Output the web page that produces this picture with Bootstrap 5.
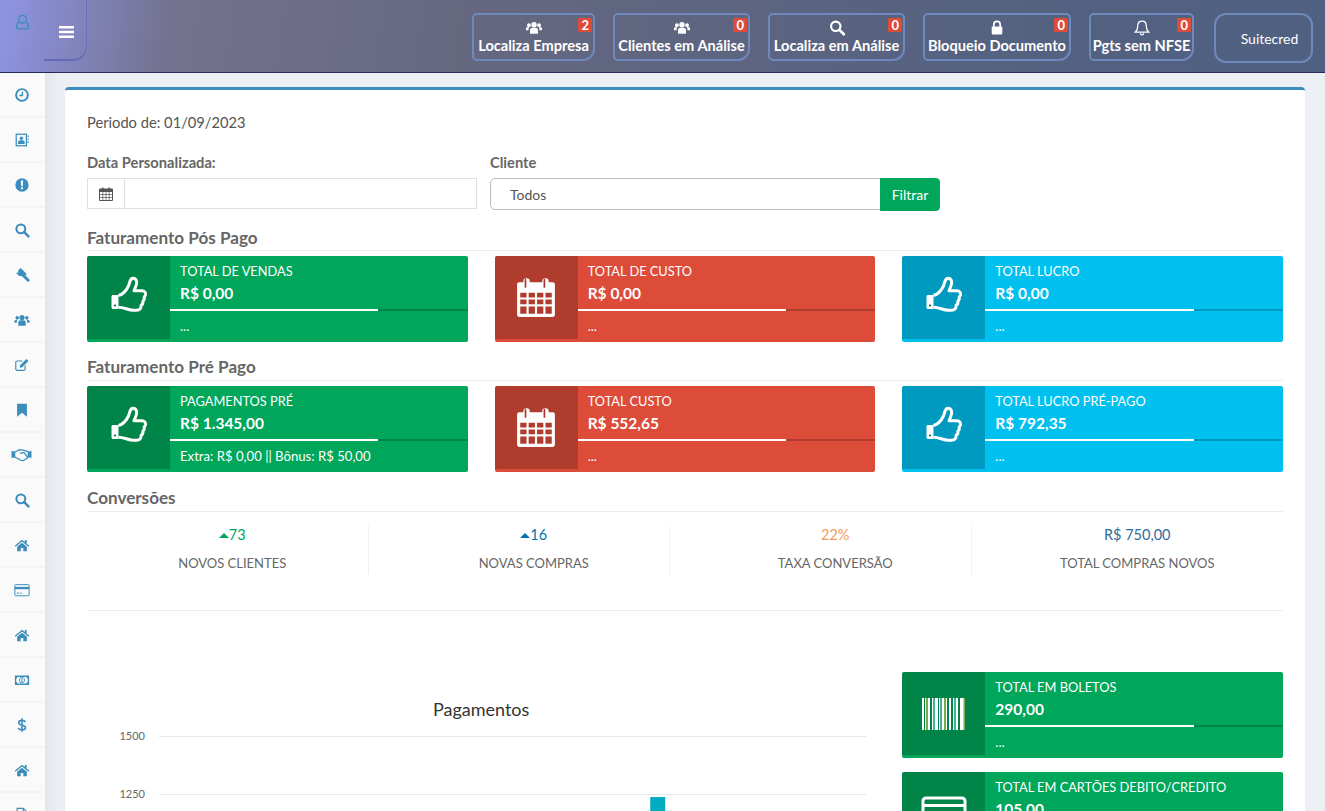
<!DOCTYPE html>
<html lang="pt-BR"><head><meta charset="utf-8"><title>Suitecred</title>
<link href="https://cdn.jsdelivr.net/npm/bootstrap@5.3.0/dist/css/bootstrap.min.css" rel="stylesheet">
<style>
html,body{height:811px;overflow:hidden}
body{font-family:Lato,"Noto Sans",sans-serif;font-size:14.7px;color:#444;background:#ecf0f5}
.topbar{height:73px;background:linear-gradient(100deg,#8f95e4 0,#73728f 13%,#666880 35%,#566280 70%,#4f6081 100%);border-bottom:1px solid #262b5a;flex-wrap:nowrap}
.usericon{width:44px;color:#3c8dbc;padding-top:13px}
.toggler{width:43px;height:61px;border:0;border-right:1px solid #6b70b8;border-bottom:2px solid #6469b8;border-bottom-right-radius:14px;background:transparent;padding:4px 0 0 2px}
.hbtn{position:relative;height:48px;border:2px solid #6f88bd;border-radius:5px 5px 12px 5px;color:#fff;font-weight:700;font-size:14.6px;line-height:1;background:transparent;text-align:center;padding:4px 0 0;white-space:nowrap;display:block}
.hbtn svg{display:block;margin:0 auto 3px;height:17px;width:18px}
.hb1{width:123px}.hb2{width:137px}.hb3{width:137px}.hb4{width:148px}.hb5{width:105px}
.hbgroup{gap:18px;margin-right:20px;margin-top:13px}
.hcount{position:absolute;top:3px;right:1px;background:#dd4b39;color:#fff;font-size:13px;font-weight:700;padding:0 3px;line-height:14px;border-radius:1px}
.brandbtn{width:99px;height:50px;margin-top:13px;border:2px solid #6f88bd;border-radius:12px;color:#fff;background:transparent;font-size:14px;margin-right:12px;padding:0 0 0 12px}
.shell{height:738px;overflow:hidden}
.sidenav{width:45px;flex:none;background:#fafafa;flex-wrap:nowrap;height:738px;overflow:hidden}
.sidenav a{height:45px;display:flex;align-items:center;justify-content:center;color:#3c8dbc;border-bottom:2px solid #f4f4f5;flex:none;padding:0 2px 0 0}
.sidenav svg{width:16px;height:16px}
.sidenav svg.widesvg{width:21px;height:19px}
.mainarea{flex:1;min-width:0;padding:14px 20px 0;background:linear-gradient(90deg,#e2e6ec 0,#ecf0f5 14px)}
.panel{background:#fff;border-top:3px solid #3c8dbc;border-radius:4px 4px 0 0;padding:21px 22px 0;height:724px;overflow:hidden;box-shadow:0 1px 1px rgba(0,0,0,.1)}
.periodo{line-height:22px;margin-bottom:20px;color:#555}
.flabel{font-size:14.7px;font-weight:700;color:#666;line-height:18px;margin-bottom:7px}
.filtercols{display:flex;gap:13px;margin-bottom:16px}
.datecol{width:390px}.clientcol{width:451px}
.dategroup .input-group-text{width:38px;background:#fff;border-radius:0;border-color:#dde0e6;padding:0;justify-content:center;height:31px;color:#555}
.dategroup .form-control{height:31px;border-radius:0;border-color:#dde0e6;min-height:31px}
.clientcol .clientsel{height:32px;width:391px;flex:none;background-image:none;border-radius:5px 0 0 5px;padding:0 19px;font-size:14px;color:#555;border-color:#b9bcc4}
.filterbtn{background:#00a65a;border-color:#00a65a;color:#fff;font-size:14px;width:60px;height:33px;padding:0;border-radius:0 4px 4px 0}
.sectitle{font-size:17.1px;font-weight:700;color:#666;border-bottom:1px solid #eee;line-height:21px;padding-bottom:2px;margin-bottom:5px}
.sectitlelow{padding-bottom:3px}
.boxrow{--bs-gutter-x:27px;margin-bottom:14px}
.boxrowlast{margin-bottom:15px}
.infobox{height:86px;border-radius:2px;color:#fff;display:flex;overflow:hidden;font-size:12.8px}
.ibgreen{background:#00a65a}.ibred{background:#dd4b39}.ibblue{background:#00c0ef}
.ibicon{width:83px;flex:none;height:83px;display:flex;align-items:center;justify-content:center;background:rgba(0,0,0,.2)}
.thumbsvg{width:40px;height:40px;margin-bottom:3px}
.calsvg{width:42px;height:42px}
.ibbody{flex:1;min-width:0}
.ibtext{padding:5px 10px 0;line-height:20px;height:53px}
.ibnum{display:block;font-weight:700;font-size:15.5px;line-height:22px;margin-top:1px}
.ibbar{height:2px;border-radius:0;background:rgba(0,0,0,.2);margin:0}
.ibbar .progress-bar{background:#fff}
.ibfoot{padding:0 10px;line-height:20px;margin-top:5px;font-size:13.15px}
.statrow{--bs-gutter-x:30px;margin-inline:-5px;margin-bottom:0;margin-top:14px}
.statcell{text-align:center;height:48px;border-right:1px solid #f0f0f0}
.statlast{border-right:0}
.statval{font-size:14.5px;line-height:18px;margin-bottom:9px}
.statlab{font-size:13px;line-height:20px;color:#666}
.vgreen{color:#00a65a}.vblue{color:#0073b7}.vorange{color:#f39c5b}.vnavy{color:#2f6c9e}
.tri{display:inline-block;width:0;height:0;border:5px solid transparent;border-top:0;vertical-align:2px}
.trigreen{border-bottom-color:#00a65a}.triblue{border-bottom-color:#0073b7}
.sep{border-top:1px solid #eee;margin:36px 0 61px}
.bottomrow{--bs-gutter-x:27px}
.chartbox{display:block;width:100%;height:140px;margin-top:8px}
.chartbox text{font-family:Lato,"Noto Sans",sans-serif}
.bbox{margin-bottom:14px}
.barcodewrap{width:43px;height:32px}
</style></head>
<body>
<svg width="0" height="0" class="d-block position-absolute">
<defs>
<symbol id="i-clock" viewBox="0 0 18 18"><circle cx="9" cy="9" r="6.6" fill="none" stroke="currentColor" stroke-width="2.2"/><path d="M9.5 5v4.600H6" fill="none" stroke="currentColor" stroke-width="1.500"/></symbol>
<symbol id="i-book" viewBox="0 0 18 18"><rect x="2.500" y="2.500" width="11.500" height="13" fill="none" stroke="currentColor" stroke-width="1.400"/><circle cx="8.300" cy="7" r="1.900" fill="currentColor"/><path d="M4.600 13.500v-2.200c0-1.400 1.200-2 3.700-2s3.700.6 3.700 2v2.200z" fill="currentColor"/><path d="M15.200 4h1.400v1.600h-1.400zM15.200 7.200h1.400v1.600h-1.400zM15.200 10.400h1.400V12h-1.400z" fill="currentColor"/></symbol>
<symbol id="i-excl" viewBox="0 0 18 18"><circle cx="9" cy="9" r="7.500" fill="currentColor"/><path d="M7.800 4h2.400l-.3 6.400H8.100zM7.900 11.500h2.200v2.200H7.900z" fill="#fff"/></symbol>
<symbol id="i-search" viewBox="0 0 18 18"><circle cx="7.700" cy="7.700" r="5" fill="none" stroke="currentColor" stroke-width="2.300"/><path d="M11.500 11.500l4.700 4.700" stroke="currentColor" stroke-width="2.800" stroke-linecap="round"/></symbol>
<symbol id="i-gavel" viewBox="0 0 18 18"><path d="M7.500 1l6.800 6.800-4 4-1.700-1.700-2.700 0L2 6.400l2.700 0 .1-2.700z" fill="currentColor"/><path d="M10.300 11.600l2.400-2.400 4.300 4.500a1.700 1.700 0 0 1-2.400 2.400z" fill="currentColor"/></symbol>
<symbol id="i-users" viewBox="0 0 18 18"><circle cx="9" cy="6.200" r="2.900" fill="currentColor"/><circle cx="3.600" cy="6.600" r="2" fill="currentColor"/><circle cx="14.400" cy="6.600" r="2" fill="currentColor"/><path d="M4.800 15.500v-3.700c0-1.600 1.200-2.500 2.500-2.500h3.400c1.300 0 2.500.9 2.500 2.500v3.700z" fill="currentColor"/><path d="M.5 12v-1.600c0-1 .8-1.800 1.800-1.800h1.600c-.5.700-.7 1.500-.7 2.400V12zM17.500 12v-1.600c0-1-.8-1.800-1.800-1.800h-1.600c.5.700.7 1.500.7 2.400V12z" fill="currentColor"/></symbol>
<symbol id="i-edit" viewBox="0 0 18 18"><path d="M12.500 9.500v4a1.500 1.500 0 0 1-1.500 1.500H3.500A1.500 1.500 0 0 1 2 13.500V6a1.500 1.500 0 0 1 1.500-1.500h6" fill="none" stroke="currentColor" stroke-width="1.300"/><path d="M6.500 12l.4-2.800 7-7 2.400 2.400-7 7z" fill="currentColor"/></symbol>
<symbol id="i-bookmark" viewBox="0 0 18 18"><path d="M3.500 2h11v14.500L9 12l-5.500 4.500z" fill="currentColor"/></symbol>
<symbol id="i-hands" viewBox="0 0 20 18"><path d="M.5 5.500l3 1v5l-3 .8zM19.500 5.500l-3 1v5l3 .8z" fill="currentColor"/><path d="M3.500 6.500C6 6 7 4.200 9.500 4.500c2 .2 4.500.4 7 2v5c-1.500 1-3 2.600-5 3.300-1.800.6-3.500-1-5-2-1-.6-2-1-3-1.300zM8.500 7.500c1.500 1 2.800-.7 4-.3l3 4" fill="none" stroke="currentColor" stroke-width="1.200"/></symbol>
<symbol id="i-home" viewBox="0 0 18 18"><path d="M9 3L.8 9.800l1 1.200L9 5l7.200 6 1-1.200-3-2.500V3.500h-2v2.100z" fill="currentColor"/><path d="M3.500 11L9 6.400l5.500 4.600v5h-4v-3.500h-3V16h-4z" fill="currentColor"/></symbol>
<symbol id="i-card" viewBox="0 0 18 18"><rect x="1" y="3" width="16" height="12.500" rx="1" fill="none" stroke="currentColor" stroke-width="1.100"/><rect x="1" y="5.500" width="16" height="2.600" fill="currentColor"/><path d="M3 12.500h3M7 12.500h2" stroke="currentColor" stroke-width="1"/></symbol>
<symbol id="i-money" viewBox="0 0 18 18"><path fill-rule="evenodd" d="M1 4h16v10.500H1zM4 5.500A2.500 2.500 0 0 1 2.500 7.500v3.500A2.500 2.500 0 0 1 4 13h10a2.500 2.500 0 0 1 1.500-2V7.500A2.500 2.500 0 0 1 14 5.500z" fill="currentColor"/><circle cx="9" cy="9.200" r="3" fill="none" stroke="currentColor" stroke-width="1"/><path d="M9 7.500v3.500" stroke="currentColor" stroke-width="1.200"/></symbol>
<symbol id="i-dollar" viewBox="0 0 18 18"><path d="M13 5.500C12 4.200 10.500 3.800 9 3.800c-2 0-3.700 1-3.700 2.700 0 3.700 7.600 1.800 7.600 5.300 0 1.800-1.800 2.700-3.900 2.700-1.700 0-3.300-.6-4.300-1.800M9 1.500v15" fill="none" stroke="currentColor" stroke-width="1.800"/></symbol>
<symbol id="i-file" viewBox="0 0 18 18"><path d="M3.500 1.500h7l4 4v11h-11zM10.500 1.500v4h4" fill="none" stroke="currentColor" stroke-width="1.300"/></symbol>
<symbol id="i-lock" viewBox="0 0 17 15"><rect x="3.500" y="6.500" width="10" height="7.500" rx="1" fill="currentColor"/><path d="M5.500 7V4.800a3 3 0 0 1 6 0V7" fill="none" stroke="currentColor" stroke-width="1.600"/></symbol>
<symbol id="i-bell" viewBox="0 0 17 15"><path d="M8.500 1.500c-2.700 0-4 1.900-4 4.300 0 3-.9 4.700-2.200 6h12.400c-1.300-1.300-2.200-3-2.200-6 0-2.400-1.300-4.300-4-4.300zM7 13a1.500 1.500 0 0 0 3 0" fill="none" stroke="currentColor" stroke-width="1.200"/></symbol>
<symbol id="i-thumb" viewBox="0 0 40 40"><path d="M9.500 19.500c4-1 8-5.500 10-9.500 1-2.200 1.200-6.500 3.500-7.500 2.500-1 4.700 1 4.700 4 0 3-1.800 5.800-2.700 8.200h8c2.500 0 3.800 1.800 3.500 4-.2 1-.8 1.700-1.400 2.300.6 2-.1 3.300-1.200 4.200.3 2-.4 3.400-1.800 4.200.2 3-1.500 4.800-4.500 4.800h-3.500c-5 0-9-3-14.600-3" fill="none" stroke="#fff" stroke-width="3" stroke-linejoin="round"/><path d="M2.500 20.500c0-1 .8-1.500 1.500-1.500h5.500v14H4c-.8 0-1.500-.6-1.500-1.500z" fill="#fff"/><circle cx="6" cy="29.500" r="1.100" fill="#00703c"/></symbol>
<symbol id="i-cal" viewBox="0 0 40 40"><path fill="#fff" fill-rule="evenodd" d="M4 5h4V3.500c0-3 6-3 6 0V5h12V3.500c0-3 6-3 6 0V5h4a2 2 0 0 1 2 2v29a2 2 0 0 1-2 2H4a2 2 0 0 1-2-2V7a2 2 0 0 1 2-2zM5 15v4.500h6V15zm8 0v4.500h6V15zm8 0v4.500h6V15zm8 0v4.500h6V15zM5 21.500V26h6v-4.500zm8 0V26h6v-4.500zm8 0V26h6v-4.500zm8 0V26h6v-4.500zM5 28v7h6v-7zm8 0v7h6v-7zm8 0v7h6v-7zm8 0v7h6v-7z"/><path d="M10 2.500v7M28 2.500v7" stroke="#a9382a" stroke-width="1.600" stroke-linecap="round"/></symbol>
</defs></svg>

<header class="topbar d-flex align-items-start">
  <div class="usericon d-flex justify-content-center">
    <svg width="17" height="19" viewBox="0 0 20 24"><circle cx="10" cy="8" r="5" fill="none" stroke="currentColor" stroke-width="1.700"/><path d="M6 11.500C3 12.500 2.500 15 2.500 18c0 1.200.6 2 2 2h11c1.400 0 2-.8 2-2 0-3-.5-5.500-3.500-6.500" fill="none" stroke="currentColor" stroke-width="1.700"/></svg>
  </div>
  <button class="toggler d-flex align-items-center justify-content-center" type="button" aria-label="menu">
    <svg width="15" height="12" viewBox="0 0 15 12"><path d="M0 0h15v2.500H0zM0 4.700h15v2.500H0zM0 9.400h15v2.500H0z" fill="#fff"/></svg>
  </button>
  <div class="ms-auto d-flex align-items-start hbgroup">
    <a class="hbtn hb1 text-decoration-none"><svg class="text-white"><use href="#i-users"/></svg>Localiza Empresa<span class="hcount">2</span></a>
    <a class="hbtn hb2 text-decoration-none"><svg class="text-white"><use href="#i-users"/></svg>Clientes em Análise<span class="hcount">0</span></a>
    <a class="hbtn hb3 text-decoration-none"><svg class="text-white"><use href="#i-search"/></svg>Localiza em Análise<span class="hcount">0</span></a>
    <a class="hbtn hb4 text-decoration-none"><svg class="text-white"><use href="#i-lock"/></svg>Bloqueio Documento<span class="hcount">0</span></a>
    <a class="hbtn hb5 text-decoration-none"><svg class="text-white"><use href="#i-bell"/></svg>Pgts sem NFSE<span class="hcount">0</span></a>
  </div>
  <button class="brandbtn" type="button">Suitecred</button>
</header>

<div class="shell d-flex">
  <nav class="sidenav d-flex flex-column nav">
    <a href="#"><svg><use href="#i-clock"/></svg></a>
    <a href="#"><svg><use href="#i-book"/></svg></a>
    <a href="#"><svg><use href="#i-excl"/></svg></a>
    <a href="#"><svg><use href="#i-search"/></svg></a>
    <a href="#"><svg><use href="#i-gavel"/></svg></a>
    <a href="#"><svg><use href="#i-users"/></svg></a>
    <a href="#"><svg><use href="#i-edit"/></svg></a>
    <a href="#"><svg><use href="#i-bookmark"/></svg></a>
    <a href="#"><svg class="widesvg"><use href="#i-hands"/></svg></a>
    <a href="#"><svg><use href="#i-search"/></svg></a>
    <a href="#"><svg><use href="#i-home"/></svg></a>
    <a href="#"><svg><use href="#i-card"/></svg></a>
    <a href="#"><svg><use href="#i-home"/></svg></a>
    <a href="#"><svg><use href="#i-money"/></svg></a>
    <a href="#"><svg><use href="#i-dollar"/></svg></a>
    <a href="#"><svg><use href="#i-home"/></svg></a>
    <a href="#"><svg><use href="#i-file"/></svg></a>
  </nav>
  <main class="mainarea">
    <section class="panel">
      <p class="periodo">Periodo de: 01/09/2023</p>
      <div class="filtercols">
        <div class="datecol">
          <div class="flabel">Data Personalizada:</div>
          <div class="input-group dategroup">
            <span class="input-group-text"><svg width="16" height="16" viewBox="0 0 16 16"><path d="M1.500 3h13v11.500h-13z" fill="none" stroke="#555" stroke-width="1"/><path d="M1.500 3h13v3h-13zM4 1.500h1.500V4H4zM10.500 1.500H12V4h-1.500z" fill="#555"/><path d="M1.500 8.500h13M1.500 11.500h13M4.800 6v8.500M8 6v8.500M11.200 6v8.500" stroke="#555" stroke-width=".7"/></svg></span>
            <input class="form-control" type="text" aria-label="Data">
          </div>
        </div>
        <div class="clientcol">
          <div class="flabel">Cliente</div>
          <div class="input-group flex-nowrap">
            <select class="form-select clientsel" aria-label="Cliente"><option>Todos</option></select>
            <button class="btn filterbtn" type="button">Filtrar</button>
          </div>
        </div>
      </div>

      <h2 class="sectitle">Faturamento Pós Pago</h2>
      <div class="row boxrow">
        <div class="col-4"><div class="infobox ibgreen"><div class="ibicon"><svg class="thumbsvg"><use href="#i-thumb"/></svg></div><div class="ibbody"><div class="ibtext">TOTAL DE VENDAS<span class="ibnum">R$ 0,00</span></div><div class="progress ibbar"><div class="progress-bar" style="width:70%"></div></div><div class="ibfoot">...</div></div></div></div>
        <div class="col-4"><div class="infobox ibred"><div class="ibicon"><svg class="calsvg"><use href="#i-cal"/></svg></div><div class="ibbody"><div class="ibtext">TOTAL DE CUSTO<span class="ibnum">R$ 0,00</span></div><div class="progress ibbar"><div class="progress-bar" style="width:70%"></div></div><div class="ibfoot">...</div></div></div></div>
        <div class="col-4"><div class="infobox ibblue"><div class="ibicon"><svg class="thumbsvg"><use href="#i-thumb"/></svg></div><div class="ibbody"><div class="ibtext">TOTAL LUCRO<span class="ibnum">R$ 0,00</span></div><div class="progress ibbar"><div class="progress-bar" style="width:70%"></div></div><div class="ibfoot">...</div></div></div></div>
      </div>

      <h2 class="sectitle sectitlelow">Faturamento Pré Pago</h2>
      <div class="row boxrow boxrowlast">
        <div class="col-4"><div class="infobox ibgreen"><div class="ibicon"><svg class="thumbsvg"><use href="#i-thumb"/></svg></div><div class="ibbody"><div class="ibtext">PAGAMENTOS PRÉ<span class="ibnum">R$ 1.345,00</span></div><div class="progress ibbar"><div class="progress-bar" style="width:70%"></div></div><div class="ibfoot">Extra: R$ 0,00 || Bônus: R$ 50,00</div></div></div></div>
        <div class="col-4"><div class="infobox ibred"><div class="ibicon"><svg class="calsvg"><use href="#i-cal"/></svg></div><div class="ibbody"><div class="ibtext">TOTAL CUSTO<span class="ibnum">R$ 552,65</span></div><div class="progress ibbar"><div class="progress-bar" style="width:70%"></div></div><div class="ibfoot">...</div></div></div></div>
        <div class="col-4"><div class="infobox ibblue"><div class="ibicon"><svg class="thumbsvg"><use href="#i-thumb"/></svg></div><div class="ibbody"><div class="ibtext">TOTAL LUCRO PRÉ-PAGO<span class="ibnum">R$ 792,35</span></div><div class="progress ibbar"><div class="progress-bar" style="width:70%"></div></div><div class="ibfoot">...</div></div></div></div>
      </div>

      <h2 class="sectitle sectitlelow">Conversões</h2>
      <div class="row statrow">
        <div class="col-3"><div class="statcell"><div class="statval vgreen"><span class="tri trigreen"></span>73</div><div class="statlab">NOVOS CLIENTES</div></div></div>
        <div class="col-3"><div class="statcell"><div class="statval vblue"><span class="tri triblue"></span>16</div><div class="statlab">NOVAS COMPRAS</div></div></div>
        <div class="col-3"><div class="statcell"><div class="statval vorange">22%</div><div class="statlab">TAXA CONVERSÃO</div></div></div>
        <div class="col-3"><div class="statcell statlast"><div class="statval vnavy">R$ 750,00</div><div class="statlab">TOTAL COMPRAS NOVOS</div></div></div>
      </div>
      <div class="sep"></div>

      <div class="row bottomrow">
        <div class="col-8">
          <svg class="chartbox" viewBox="0 0 788 140" preserveAspectRatio="xMinYMin slice">
            <text x="394" y="36" text-anchor="middle" font-size="18" fill="#333">Pagamentos</text>
            <text x="58" y="60" text-anchor="end" font-size="11" fill="#666">1500</text>
            <text x="58" y="118" text-anchor="end" font-size="11" fill="#666">1250</text>
            <path d="M72 56.500h707M72 114.500h707" stroke="#e8e8e8" stroke-width="1"/>
            <rect x="563" y="117" width="15" height="30" fill="#00acc1"/>
          </svg>
        </div>
        <div class="col-4">
          <div class="infobox ibgreen bbox"><div class="ibicon">
            <svg class="barcodewrap" viewBox="0 0 43 32"><path d="M0 0h2v32H0zM3 0h1v32H3zM6 0h2v32H6zM10 0h1v32h-1zM13 0h3v32h-3zM17 0h1v32h-1zM20 0h2v32h-2zM24 0h1v32h-1zM27 0h2v32h-2zM31 0h1v32h-1zM34 0h2v32h-2zM38 0h3v32h-3z" fill="#fff"/><path d="M4.500 0h1v32h-1zM22.500 0h1v32h-1zM41 0h1.500v32H41z" fill="#f3d34a"/><path d="M11.500 0h1v32h-1zM18.500 0h1v32h-1zM32.500 0h1v32h-1z" fill="#8fd8e8"/></svg>
          </div><div class="ibbody"><div class="ibtext">TOTAL EM BOLETOS<span class="ibnum">290,00</span></div><div class="progress ibbar"><div class="progress-bar" style="width:70%"></div></div><div class="ibfoot">...</div></div></div>
          <div class="infobox ibgreen"><div class="ibicon">
            <svg width="46" height="36" viewBox="0 0 46 36"><rect x="2" y="2" width="42" height="32" rx="3" fill="none" stroke="#fff" stroke-width="3"/><path d="M2 8h42v3H2z" fill="#fff"/></svg>
          </div><div class="ibbody"><div class="ibtext">TOTAL EM CARTÕES DEBITO/CREDITO<span class="ibnum">105,00</span></div></div></div>
        </div>
      </div>
    </section>
  </main>
</div>
<script src="https://cdn.jsdelivr.net/npm/bootstrap@5.3.0/dist/js/bootstrap.bundle.min.js"></script>
</body></html>
